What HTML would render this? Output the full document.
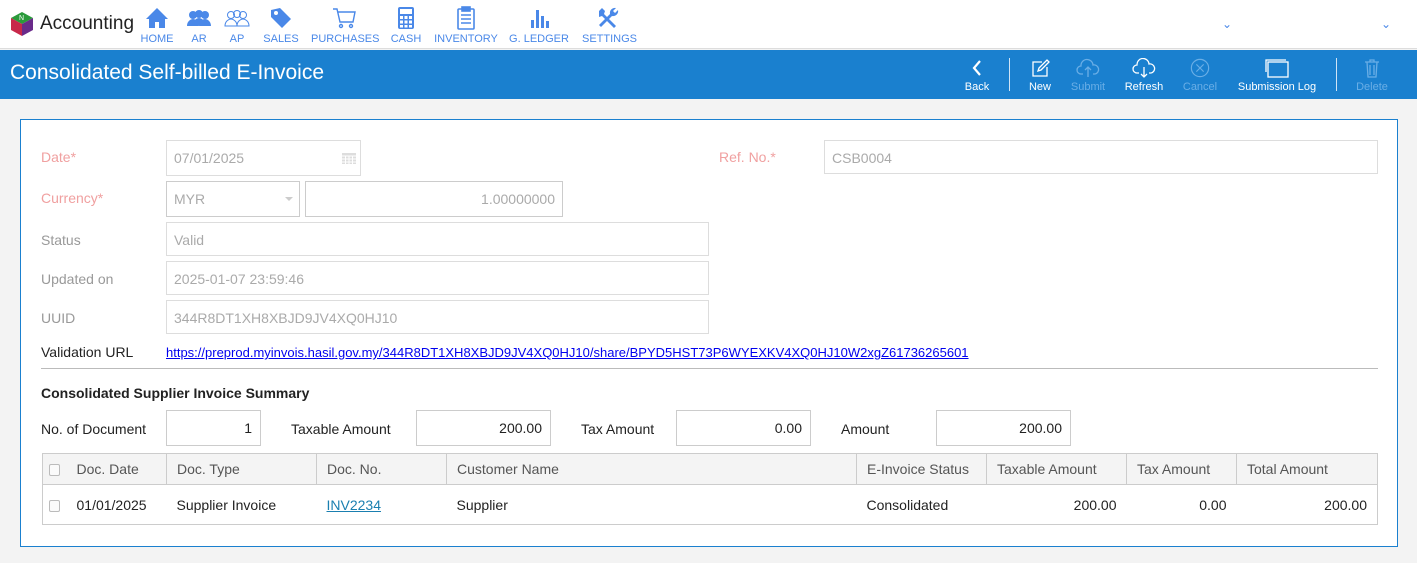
<!DOCTYPE html>
<html><head><meta charset="utf-8"><style>
*{box-sizing:border-box;margin:0;padding:0}
body{width:1417px;height:563px;background:#f3f3f3;font-family:"Liberation Sans",sans-serif;position:relative;overflow:hidden;color:#222}
.abs{position:absolute}
#top{position:absolute;left:0;top:0;width:1417px;height:49px;background:#fff;border-bottom:1px solid #ddd}
.nav{position:absolute;top:5px;text-align:center;color:#4a88e8;font-size:11px}
.nav svg{display:block;margin:0 auto 2px;height:26px}
#bar{position:absolute;left:0;top:50px;width:1417px;height:49px;background:#1a80cf;color:#fff}
.tb{position:absolute;top:8px;text-align:center;font-size:11px;color:#fff}
.tb svg{display:block;margin:0 auto 3px;height:20px}
.dis{color:#6aaee6}
#panel{position:absolute;left:20px;top:119px;width:1378px;height:428px;background:#fff;border:1px solid #1a80cf}
.lbl{position:absolute;font-size:14px;color:#999}
.req{color:#f0a0a0}
.inp{position:absolute;height:36px;border:1px solid #ddd;font-size:14px;color:#aaa;padding:9px 7px;background:#fff}
.inp2{position:absolute;height:36px;border:1px solid #ccc;font-size:14px;color:#222;padding:9px 8px;text-align:right;background:#fff}
.blk{position:absolute;font-size:14px;color:#222}
table{position:absolute;left:21px;top:333px;width:1335px;border-collapse:collapse;font-size:14px;table-layout:fixed}
th{background:#f4f4f4;font-weight:normal;color:#555;text-align:left;height:31px;padding:0 10px;border:1px solid #ccc;border-top:1px solid #ccc}
td{height:40px;padding:0 10px;border-bottom:1px solid #ccc}
.cb{display:inline-block;width:11px;height:12px;border:1px solid #bbb;border-radius:2px;background:#fafafa;vertical-align:middle}
.r{text-align:right}
</style></head><body>
<div id="top">
 <div class="abs" style="left:9px;top:11px;width:26px;height:26px">
  <svg width="26" height="26" viewBox="0 0 26 26"><polygon points="13,1 24,7 13,13 2,7" fill="#2a9a3a"/><polygon points="2,7 13,13 13,25 2,19" fill="#c8284a"/><polygon points="24,7 13,13 13,25 24,19" fill="#6a2a8a"/><text x="10" y="9" font-size="7" fill="#fff" font-family="Liberation Sans">N</text></svg>
 </div>
 <div class="abs" style="left:40px;top:13px;font-size:19px;color:#222">Accounting</div>
 <div class="nav" style="left:140px;width:34px"><svg viewBox="0 0 24 24" width="24"><path d="M12 2L1 13h3v9h6v-6h4v6h6v-9h3z" fill="#4a88e8"/></svg>HOME</div>
 <div class="nav" style="left:186px;width:26px"><svg viewBox="0 0 26 24" width="26"><circle cx="7" cy="9" r="4" fill="#4a88e8"/><circle cx="13" cy="8" r="4" fill="#4a88e8"/><circle cx="19" cy="9" r="4" fill="#4a88e8"/><path d="M1 20c0-5 4-7 6-7s6 2 6 7zM7 19c0-5 4-7 6-7s6 2 6 7zM13 20c0-5 4-7 6-7s6 2 6 7z" fill="#4a88e8"/></svg>AR</div>
 <div class="nav" style="left:224px;width:26px"><svg viewBox="0 0 26 24" width="26" fill="none" stroke="#4a88e8"><circle cx="7" cy="9" r="3.5"/><circle cx="13" cy="8" r="3.5"/><circle cx="19" cy="9" r="3.5"/><path d="M1 20c0-5 4-7 6-7s6 2 6 7zM13 20c0-5 4-7 6-7s6 2 6 7z"/></svg>AP</div>
 <div class="nav" style="left:263px;width:36px"><svg viewBox="0 0 24 24" width="24"><path d="M2 4l9-2 11 11-9 9L2 11z" fill="#4a88e8"/><circle cx="7" cy="7" r="2" fill="#fff"/></svg>SALES</div>
 <div class="nav" style="left:311px;width:66px"><svg viewBox="0 0 26 24" width="26" fill="none" stroke="#4a88e8" stroke-width="1.4"><path d="M2 3h4l3 13h13l2-10H7"/><circle cx="10" cy="20" r="1.5"/><circle cx="20" cy="20" r="1.5"/></svg>PURCHASES</div>
 <div class="nav" style="left:390px;width:32px"><svg viewBox="0 0 20 24" width="20"><rect x="2" y="1" width="16" height="22" rx="2" fill="#4a88e8"/><rect x="4" y="3" width="12" height="5" fill="#fff"/><g fill="#fff"><rect x="4" y="10" width="3" height="3"/><rect x="8.5" y="10" width="3" height="3"/><rect x="13" y="10" width="3" height="3"/><rect x="4" y="14.5" width="3" height="3"/><rect x="8.5" y="14.5" width="3" height="3"/><rect x="13" y="14.5" width="3" height="3"/><rect x="4" y="19" width="3" height="2.5"/><rect x="8.5" y="19" width="3" height="2.5"/><rect x="13" y="19" width="3" height="2.5"/></g></svg>CASH</div>
 <div class="nav" style="left:434px;width:64px"><svg viewBox="0 0 20 24" width="20" fill="none" stroke="#4a88e8" stroke-width="1.6"><rect x="2" y="3" width="16" height="20" rx="1"/><rect x="6" y="1" width="8" height="4" fill="#4a88e8"/><path d="M5 9h10M5 13h10M5 17h10"/></svg>INVENTORY</div>
 <div class="nav" style="left:509px;width:60px"><svg viewBox="0 0 24 24" width="24" fill="#4a88e8"><rect x="4" y="14" width="3" height="8"/><rect x="9" y="4" width="3" height="18"/><rect x="14" y="10" width="3" height="12"/><rect x="19" y="15" width="3" height="7"/></svg>G. LEDGER</div>
 <div class="nav" style="left:582px;width:52px"><svg viewBox="0 0 24 24" width="24" fill="#4a88e8"><path d="M3 5l3-3 3 3-1 3 12 12-2 2L6 10l-3 1z"/><path d="M20 2a5 5 0 0 0-6 6L3 19l2 2L16 10a5 5 0 0 0 6-6l-3 3-2-2z"/></svg>SETTINGS</div>
 <div class="abs" style="left:1222px;top:17px;color:#4a88e8;font-size:12px">&#8964;</div>
 <div class="abs" style="left:1381px;top:17px;color:#4a88e8;font-size:12px">&#8964;</div>
</div>
<div id="bar">
 <div class="abs" style="left:10px;top:11px;font-size:21px">Consolidated Self-billed E-Invoice</div>
 <div class="tb" style="left:962px;width:30px"><svg viewBox="0 0 20 20" width="20" fill="none" stroke="#fff" stroke-width="2.2"><path d="M13 3l-6 7 6 7"/></svg>Back</div>
 <div class="abs" style="left:1009px;top:8px;width:1px;height:33px;background:#cfe4f6"></div>
 <div class="tb" style="left:1026px;width:28px"><svg viewBox="0 0 20 20" width="20" fill="none" stroke="#fff" stroke-width="1.3"><path d="M12 4H3v14h14V9"/><path d="M8 13l1-3 8-8 2 2-8 8z"/></svg>New</div>
 <div class="tb dis" style="left:1068px;width:40px"><svg viewBox="0 0 24 20" width="24" fill="none" stroke="#6aaee6" stroke-width="1.3"><path d="M7 16H5a4 4 0 0 1 0-8 6 6 0 0 1 12-1 4.5 4.5 0 0 1 2 9h-2M12 19V9M9 12l3-3 3 3"/></svg>Submit</div>
 <div class="tb" style="left:1122px;width:44px"><svg viewBox="0 0 24 20" width="24" fill="none" stroke="#fff" stroke-width="1.3"><path d="M7 15H5a4 4 0 0 1 0-8 6 6 0 0 1 12-1 4.5 4.5 0 0 1 2 9h-2M12 9v10M9 16l3 3 3-3"/></svg>Refresh</div>
 <div class="tb dis" style="left:1180px;width:40px"><svg viewBox="0 0 22 22" width="22" fill="none" stroke="#6aaee6" stroke-width="1.3"><circle cx="11" cy="11" r="9.5"/><path d="M7 7l8 8M15 7l-8 8"/></svg>Cancel</div>
 <div class="tb" style="left:1236px;width:82px"><svg viewBox="0 0 24 20" width="24" fill="none" stroke="#fff" stroke-width="1.3"><path d="M1 14V2h20"/><rect x="3" y="4" width="20" height="15"/></svg>Submission Log</div>
 <div class="abs" style="left:1336px;top:8px;width:1px;height:33px;background:#cfe4f6"></div>
 <div class="tb dis" style="left:1354px;width:36px"><svg viewBox="0 0 20 20" width="20" fill="none" stroke="#6aaee6" stroke-width="1.3"><path d="M3 4h14M8 4V2h4v2M5 4l1 15h8l1-15M8 7v10M12 7v10"/></svg>Delete</div>
</div>
<div id="panel">
 <div class="lbl req" style="left:20px;top:29px">Date*</div>
 <div class="inp" style="left:145px;top:20px;width:195px">07/01/2025<svg class="abs" style="right:4px;top:12px" width="14" height="11" viewBox="0 0 14 11"><rect width="14" height="11" fill="#ddd"/><g stroke="#fff"><path d="M0 3h14M0 6h14M0 9h14M3.5 3v8M7 3v8M10.5 3v8"/></g></svg></div>
 <div class="lbl req" style="left:698px;top:29px">Ref. No.*</div>
 <div class="inp" style="left:803px;top:20px;width:554px;height:34px">CSB0004</div>
 <div class="lbl req" style="left:20px;top:70px">Currency*</div>
 <div class="inp" style="left:145px;top:61px;width:134px;border-color:#ccc">MYR<span class="abs" style="right:6px;top:15px;border:4px solid transparent;border-top:4px solid #ccc"></span></div>
 <div class="inp" style="left:284px;top:61px;width:258px;text-align:right;border-color:#ccc">1.00000000</div>
 <div class="lbl" style="left:20px;top:112px">Status</div>
 <div class="inp" style="left:145px;top:102px;width:543px;height:34px">Valid</div>
 <div class="lbl" style="left:20px;top:151px">Updated on</div>
 <div class="inp" style="left:145px;top:141px;width:543px;height:34px">2025-01-07 23:59:46</div>
 <div class="lbl" style="left:20px;top:190px">UUID</div>
 <div class="inp" style="left:145px;top:180px;width:543px;height:34px">344R8DT1XH8XBJD9JV4XQ0HJ10</div>
 <div class="blk" style="left:20px;top:224px">Validation URL</div>
 <div class="abs" style="left:145px;top:225px;font-size:13px;color:#0000ee;text-decoration:underline;white-space:nowrap">https://preprod.myinvois.hasil.gov.my/344R8DT1XH8XBJD9JV4XQ0HJ10/share/BPYD5HST73P6WYEXKV4XQ0HJ10W2xgZ61736265601</div>
 <div class="abs" style="left:20px;top:248px;width:1337px;height:1px;background:#bbb"></div>
 <div class="blk" style="left:20px;top:265px;font-weight:bold">Consolidated Supplier Invoice Summary</div>
 <div class="blk" style="left:20px;top:301px">No. of Document</div>
 <div class="inp2" style="left:145px;top:290px;width:95px">1</div>
 <div class="blk" style="left:270px;top:301px">Taxable Amount</div>
 <div class="inp2" style="left:395px;top:290px;width:135px">200.00</div>
 <div class="blk" style="left:560px;top:301px">Tax Amount</div>
 <div class="inp2" style="left:655px;top:290px;width:135px">0.00</div>
 <div class="blk" style="left:820px;top:301px">Amount</div>
 <div class="inp2" style="left:915px;top:290px;width:135px">200.00</div>
 <table>
  <colgroup><col style="width:24px"><col style="width:100px"><col style="width:150px"><col style="width:130px"><col style="width:410px"><col style="width:130px"><col style="width:140px"><col style="width:110px"><col style="width:141px"></colgroup>
  <tr><th style="padding:0 6px;border-right:none"><span class="cb"></span></th><th style="border-left:none">Doc. Date</th><th>Doc. Type</th><th>Doc. No.</th><th>Customer Name</th><th>E-Invoice Status</th><th>Taxable Amount</th><th>Tax Amount</th><th>Total Amount</th></tr>
  <tr><td style="padding:0 6px;border-left:1px solid #ccc"><span class="cb"></span></td><td>01/01/2025</td><td>Supplier Invoice</td><td><span style="color:#1a7fb0;text-decoration:underline">INV2234</span></td><td>Supplier</td><td>Consolidated</td><td class="r">200.00</td><td class="r">0.00</td><td class="r" style="border-right:1px solid #ccc">200.00</td></tr>
 </table>
</div>
</body></html>
